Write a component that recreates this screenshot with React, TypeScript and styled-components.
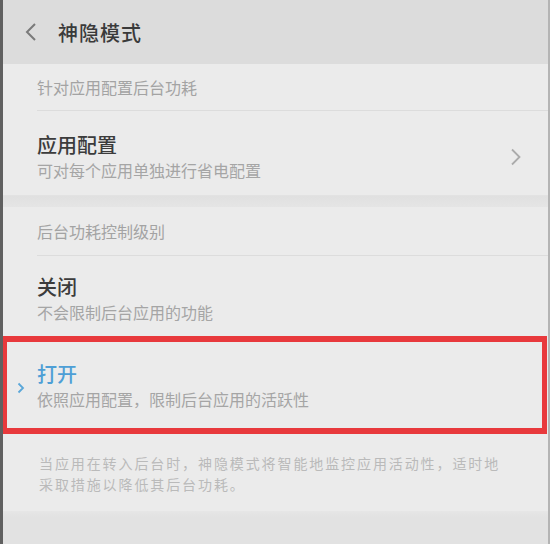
import React from 'react';
import styled, { createGlobalStyle } from 'styled-components';

const GlobalStyle = createGlobalStyle`
  html, body {
    margin: 0;
    padding: 0;
    background: #ebebeb;
  }
  body {
    font-family: "Noto Sans CJK SC", "Noto Sans", sans-serif;
  }
`;

const Screen = styled.div`
  box-sizing: border-box;
  width: 550px;
  height: 544px;
  display: flex;
  flex-direction: column;
  background: #ebebeb;
  border-left: 3px solid #606060;
  border-right: 2px solid #b4b4b4;
  overflow: hidden;
`;

const Header = styled.header`
  height: 64px;
  flex-shrink: 0;
  display: flex;
  align-items: center;
  gap: 20px;
  padding-left: 21px;
  background: #dcdcdc;
`;

const Title = styled.h1`
  margin: 0;
  font-size: 20px;
  font-weight: 500;
  color: #3a3a3a;
  letter-spacing: 1px;
`;

const Group = styled.section`
  display: flex;
  flex-direction: column;
  background: #ebebeb;
`;

const GroupLabel = styled.div<{ $height: number }>`
  height: ${(p) => p.$height}px;
  display: flex;
  align-items: center;
  margin-left: 34px;
  border-bottom: 1px solid #dcdcdc;
  font-size: 16px;
  color: #a3a3a3;
`;

const Row = styled.div<{ $top: number; $bottom: number; $highlight?: boolean }>`
  display: flex;
  align-items: center;
  padding: ${(p) => p.$top}px 26px ${(p) => p.$bottom}px 34px;
  ${(p) =>
    p.$highlight &&
    `
    margin-left: -1px;
    margin-right: 1px;
    padding-left: 30px;
    border: 5px solid #e8393c;
    border-top-width: 6px;
    border-bottom-width: 6px;
  `}
`;

const RowText = styled.div`
  flex: 1;
  display: flex;
  flex-direction: column;
  gap: 1px;
`;

const RowTitle = styled.div<{ $active?: boolean }>`
  font-size: 20px;
  line-height: 26px;
  font-weight: 500;
  color: ${(p) => (p.$active ? '#4e9fd6' : '#3c3c3c')};
`;

const RowSub = styled.div`
  font-size: 16px;
  line-height: 22px;
  color: #a5a5a5;
`;

const MarkerSlot = styled.div`
  position: relative;
  width: 0;
  align-self: flex-start;
`;

const Marker = styled.svg`
  position: absolute;
  left: -20px;
  top: 21px;
`;

const Separator = styled.div`
  height: 11px;
  background: linear-gradient(#e0e0e0, #e5e5e5);
  border-top: 1px solid #e2e2e2;
`;

const Note = styled.div`
  padding: 19px 30px 16px 36px;
  font-size: 14px;
  letter-spacing: 1.9px;
  line-height: 21px;
  color: #bababa;
`;

const NoteLine = styled.div`
  white-space: nowrap;
`;

const Footer = styled.div`
  flex: 1;
  background: linear-gradient(#e6e6e6, #e2e2e2 6px);
`;

const BackIcon = () => (
  <svg width="14" height="20" viewBox="0 0 14 20">
    <path d="M11 2 L3 10 L11 18" fill="none" stroke="#7a7a7a" strokeWidth="2" />
  </svg>
);

const ChevronRight = () => (
  <svg width="12" height="18" viewBox="0 0 12 18">
    <path d="M2 1.5 L9.5 9 L2 16.5" fill="none" stroke="#ababab" strokeWidth="1.8" />
  </svg>
);

export default function App() {
  return (
    <>
      <GlobalStyle />
      <Screen>
        <Header>
          <BackIcon />
          <Title>神隐模式</Title>
        </Header>

        <Group>
          <GroupLabel $height={46}>针对应用配置后台功耗</GroupLabel>
          <Row $top={21} $bottom={14}>
            <RowText>
              <RowTitle>应用配置</RowTitle>
              <RowSub>可对每个应用单独进行省电配置</RowSub>
            </RowText>
            <ChevronRight />
          </Row>
        </Group>

        <Separator />

        <Group>
          <GroupLabel $height={48}>后台功耗控制级别</GroupLabel>
          <Row $top={18} $bottom={13}>
            <RowText>
              <RowTitle>关闭</RowTitle>
              <RowSub>不会限制后台应用的功能</RowSub>
            </RowText>
          </Row>
          <Row $top={19} $bottom={18} $highlight>
            <MarkerSlot>
              <Marker width="8" height="12" viewBox="0 0 8 12">
                <path d="M1.5 1.5 L6 6 L1.5 10.5" fill="none" stroke="#5aa7d9" strokeWidth="1.8" />
              </Marker>
            </MarkerSlot>
            <RowText>
              <RowTitle $active>打开</RowTitle>
              <RowSub>依照应用配置，限制后台应用的活跃性</RowSub>
            </RowText>
          </Row>
        </Group>

        <Note>
          <NoteLine>当应用在转入后台时，神隐模式将智能地监控应用活动性，适时地</NoteLine>
          <NoteLine>采取措施以降低其后台功耗。</NoteLine>
        </Note>

        <Footer />
      </Screen>
    </>
  );
}
